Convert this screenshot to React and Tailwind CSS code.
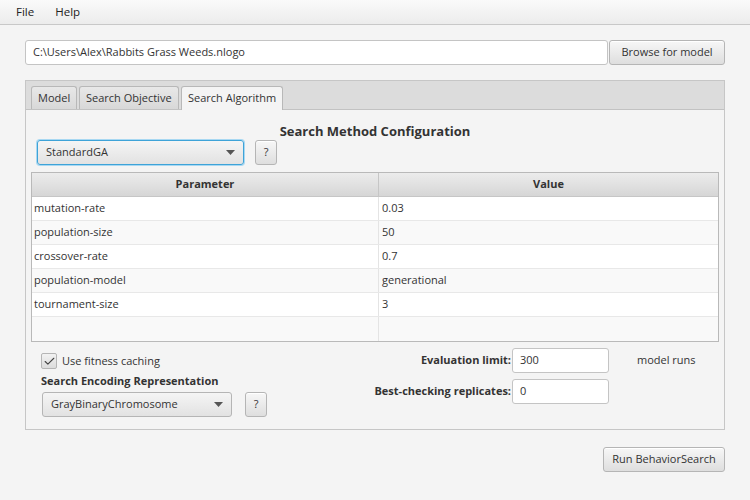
import { Check } from 'lucide-react';

const params = [
  ['mutation-rate', '0.03'],
  ['population-size', '50'],
  ['crossover-rate', '0.7'],
  ['population-model', 'generational'],
  ['tournament-size', '3'],
  ['', ''],
];

function Button({ children, className = '' }) {
  return (
    <button
      className={`h-[25px] px-[8px] whitespace-nowrap rounded-[3px] border border-[#b5b5b5] bg-gradient-to-b from-[#f7f7f7] to-[#dedede] text-[11px] text-[#333] shadow-[inset_0_1px_0_#fff] ${className}`}
    >
      {children}
    </button>
  );
}

function Combo({ value, focused, className = '' }) {
  return (
    <div
      className={`h-[25px] flex items-center justify-between pl-[8px] pr-[8px] rounded-[3px] bg-gradient-to-b from-[#f5f5f5] to-[#e2e2e2] text-[11px] text-[#333] ${
        focused ? 'border border-[#3ea3d8] shadow-[0_0_0_1px_#a8d8f2]' : 'border border-[#b5b5b5]'
      } ${className}`}
    >
      <span>{value}</span>
      <svg width="9" height="5" viewBox="0 0 9 5">
        <path d="M0 0h9L4.5 5z" fill="#555" />
      </svg>
    </div>
  );
}

function Field({ value, className = '' }) {
  return (
    <div className={`h-[25px] flex items-center px-[7px] rounded-[3px] border border-[#c4c4c4] bg-white text-[11px] text-[#333] ${className}`}>
      {value}
    </div>
  );
}

const tabBase = 'px-[6px] flex items-center border border-b-0 border-[#b8b8b8] rounded-t-[3px] whitespace-nowrap';

export default function App() {
  return (
    <div className="w-[750px] h-[500px] bg-[#f4f4f4] flex flex-col text-[11px] text-[#333]" style={{ fontFamily: '"Open Sans", "Noto Sans", sans-serif' }}>
      <div className="h-[25px] flex items-center gap-[21px] px-[16px] bg-gradient-to-b from-[#fafafa] to-[#ececec] border-b border-[#c8c8c8] text-[11.5px] text-[#222]">
        <span>File</span>
        <span>Help</span>
      </div>

      <div className="flex items-center pl-[25px] pr-[25px] mt-[15px]">
        <Field value="C:\Users\Alex\Rabbits Grass Weeds.nlogo" className="w-[584px]" />
        <Button className="ml-[1px] w-[116px]">Browse for model</Button>
      </div>

      <div className="mx-[25px] mt-[15px] h-[350px] border border-[#c6c6c6] flex flex-col">
        <div className="h-[29px] bg-[#dcdcdc] border-b border-[#c2c2c2] flex items-end pl-[5px] gap-[2px]">
          <div className={`${tabBase} w-[46px] h-[23px] bg-gradient-to-b from-[#e8e8e8] to-[#d8d8d8]`}>Model</div>
          <div className={`${tabBase} w-[100px] h-[23px] bg-gradient-to-b from-[#e8e8e8] to-[#d8d8d8]`}>Search Objective</div>
          <div className={`${tabBase} w-[102px] h-[24px] mb-[-1px] bg-[#f4f4f4]`}>Search Algorithm</div>
        </div>

        <div className="flex-1 flex flex-col px-[5px]">
          <div className="text-center font-bold text-[13px] text-[#333] mt-[12px] leading-[18px]">Search Method Configuration</div>
          <div className="flex items-center gap-[11px] pl-[6px]">
            <Combo value="StandardGA" focused className="w-[207px]" />
            <Button className="w-[22px] !px-0">?</Button>
          </div>

          <div className="mt-[7px] border border-[#b9b9b9] bg-white">
            <div className="grid grid-cols-[347px_1fr] h-[24px] bg-gradient-to-b from-[#ececec] to-[#d6d6d6] border-b border-[#c6c6c6] font-bold">
              <div className="flex items-center justify-center border-r border-[#c6c6c6]">Parameter</div>
              <div className="flex items-center justify-center">Value</div>
            </div>
            {params.map(([k, v], i) => (
              <div key={i} className={`grid grid-cols-[347px_1fr] h-[24px] ${i < 5 ? 'border-b border-[#e8e8e8]' : ''} ${i % 2 ? 'bg-[#f9f9f9]' : 'bg-white'}`}>
                <div className="flex items-center pl-[2px] border-r border-[#e4e4e4]">{k}</div>
                <div className="flex items-center pl-[3px]">{v}</div>
              </div>
            ))}
          </div>

          <div className="flex mt-[2px]">
            <div className="flex flex-col pl-[10px] w-[330px]">
              <div className="flex items-center gap-[5px] mt-[9px]">
                <div className="w-[16px] h-[16px] rounded-[2px] border border-[#b5b5b5] bg-gradient-to-b from-[#f2f2f2] to-[#dcdcdc] flex items-center justify-center">
                  <Check size={13} strokeWidth={2} color="#444" />
                </div>
                <span>Use fitness caching</span>
              </div>
              <div className="font-bold mt-[3px]">Search Encoding Representation</div>
              <div className="flex items-center gap-[13px] mt-[3px] pl-[1px]">
                <Combo value="GrayBinaryChromosome" className="w-[190px]" />
                <Button className="w-[22px] !px-0">?</Button>
              </div>
            </div>
            <div className="flex flex-col gap-[6px] mt-[4px]">
              <div className="flex items-center">
                <div className="w-[150px] text-right font-bold">Evaluation limit:</div>
                <Field value="300" className="ml-[1px] w-[97px]" />
                <span className="ml-[28px]">model runs</span>
              </div>
              <div className="flex items-center">
                <div className="w-[150px] text-right font-bold">Best-checking replicates:</div>
                <Field value="0" className="ml-[1px] w-[97px]" />
              </div>
            </div>
          </div>
        </div>
      </div>

      <div className="flex justify-end pr-[25px] mt-[17px]">
        <Button className="w-[122px]">Run BehaviorSearch</Button>
      </div>
    </div>
  );
}
